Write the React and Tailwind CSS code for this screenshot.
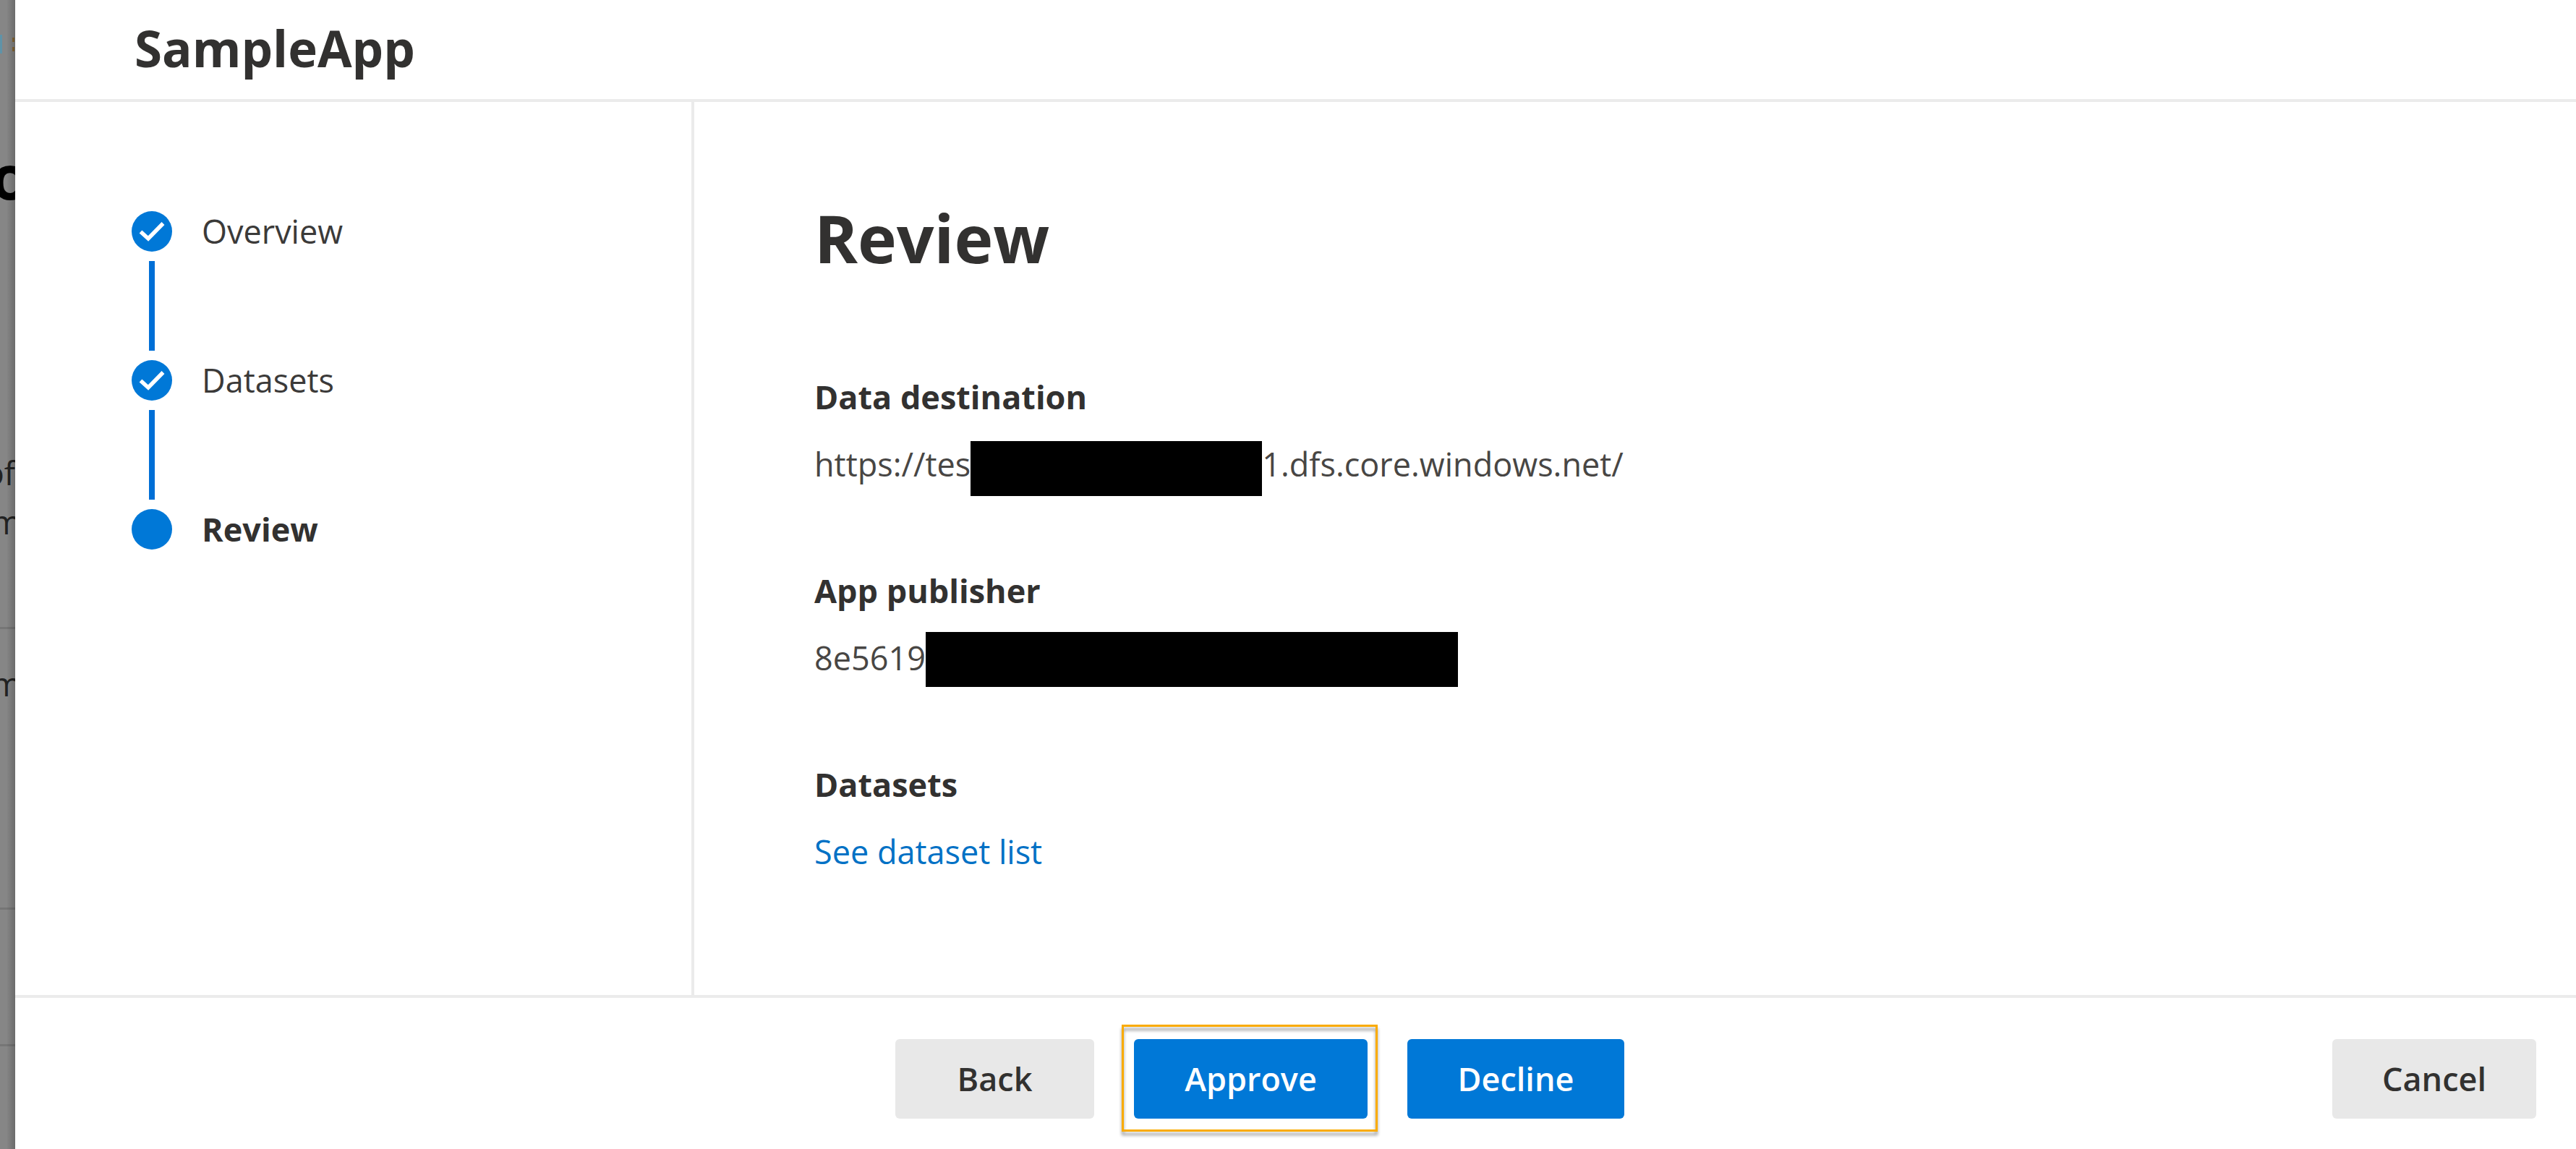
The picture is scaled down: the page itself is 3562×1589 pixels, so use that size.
const steps = [
  { label: "Overview", state: "done" },
  { label: "Datasets", state: "done" },
  { label: "Review", state: "current" },
];

function StepMark({ done }) {
  return (
    <svg viewBox="0 0 56 56" className="h-14 w-14 shrink-0" aria-hidden="true">
      <circle cx="28" cy="28" r="28" fill="#0078d7" />
      {done && <path d="M12.500 28.500l10.500 9.500 20.500-21" fill="none" stroke="#fff" strokeWidth="5.500" />}
    </svg>
  );
}

function Step({ label, state, last }) {
  return (
    <li aria-current={state === "current" ? "step" : undefined}>
      <div className="flex h-14 items-center gap-[41px]">
        <StepMark done={state === "done"} />
        <span className={state === "current" ? "font-bold" : "text-[#3b3a39]"}>{label}</span>
      </div>
      {!last && <div className="my-[13px] ml-6 h-[124px] w-2 bg-[#006fd6]" />}
    </li>
  );
}

function Field({ title, children }) {
  return (
    <section>
      <h3 className="font-bold">{title}</h3>
      <div className="mt-[25px] flex h-20 items-start text-[#484644]">{children}</div>
    </section>
  );
}

function Backdrop() {
  return (
    <div
      className="relative w-[21px] shrink-0 overflow-hidden bg-[#868686] text-black"
      aria-hidden="true"
    >
      <div className="absolute top-[48px] left-0 h-[26px] w-[3px] bg-[#5f93a8]" />
      <div className="absolute top-[52px] left-[17px] h-[6px] w-[3px] bg-[#8a6a35]" />
      <div className="absolute top-[65px] left-[17px] h-[6px] w-[3px] bg-[#8a6a35]" />
      <span className="absolute top-[188px] left-[-12px] text-[84px] leading-[112px] font-bold">o</span>
      <span className="absolute top-[622px] right-0 text-[#222]">of</span>
      <span className="absolute top-[690px] left-[-12px] text-[#222]">m</span>
      <div className="absolute top-[867px] left-0 h-[3px] w-full bg-[#767676]" />
      <span className="absolute top-[914px] left-[-12px] text-[#222]">m</span>
      <div className="absolute top-[1255px] left-0 h-[3px] w-full bg-[#767676]" />
      <div className="absolute top-[1444px] left-0 h-[3px] w-full bg-[#767676]" />
      <div className="absolute inset-y-0 right-0 w-3 bg-linear-to-r from-transparent to-black/20" />
    </div>
  );
}

export default function App() {
  return (
    <div className="flex min-h-screen bg-white font-['Open_Sans',sans-serif] text-[45px] leading-[64px] text-[#323130]">
      <Backdrop />
      <div role="dialog" aria-labelledby="title" className="flex min-w-0 flex-1 flex-col">
        <header className="border-b-4 border-[#ebebeb] pt-[18px] pb-[23px] pl-[165px]">
          <h1 id="title" className="text-[69px] leading-[96px] font-bold">SampleApp</h1>
        </header>
        <div className="flex flex-1">
          <nav className="w-[939px] shrink-0 border-r-4 border-[#ebebeb] pt-[151px] pl-[161px]" aria-label="Steps">
            <ol>
              {steps.map((s, i) => (
                <Step key={s.label} {...s} last={i === steps.length - 1} />
              ))}
            </ol>
          </nav>
          <main className="flex-1 pt-[124px] pl-[166px]">
            <h2 className="text-[91px] leading-[128px] font-bold">Review</h2>
            <div className="mt-[124px] flex flex-col gap-[99px]">
              <Field title="Data destination">
                <span className="mt-1">https://tes</span>
                <span className="h-[76px] w-[403px] self-end bg-black" />
                <span className="mt-1">1.dfs.core.windows.net/</span>
              </Field>
              <Field title="App publisher">
                <span className="mt-1">8e5619</span>
                <span className="h-[76px] w-[736px] bg-black" />
              </Field>
              <Field title="Datasets">
                <a href="#datasets" className="mt-1 text-[#0071c5]">See dataset list</a>
              </Field>
            </div>
          </main>
        </div>
        <footer className="flex items-center border-t-4 border-[#ebebeb] pt-[57px] pr-[55px] pb-[42px] pl-[1217px] font-semibold">
          <div className="flex gap-[55px]">
            <button className="h-[110px] w-[275px] rounded-md bg-[#e8e8e8]">Back</button>
            <div className="relative">
              <button className="h-[110px] w-[323px] rounded-md bg-[#0078d7] text-white">Approve</button>
              <div className="pointer-events-none absolute -top-5 -right-[14px] -bottom-[18px] -left-[17px] border-[3px] border-[#faab00] drop-shadow-[0_5px_2px_rgba(0,0,0,0.4)]" />
            </div>
            <button className="h-[110px] w-[300px] rounded-md bg-[#0078d7] text-white">Decline</button>
          </div>
          <button className="ml-auto h-[110px] w-[282px] rounded-md bg-[#e8e8e8]">Cancel</button>
        </footer>
      </div>
    </div>
  );
}
